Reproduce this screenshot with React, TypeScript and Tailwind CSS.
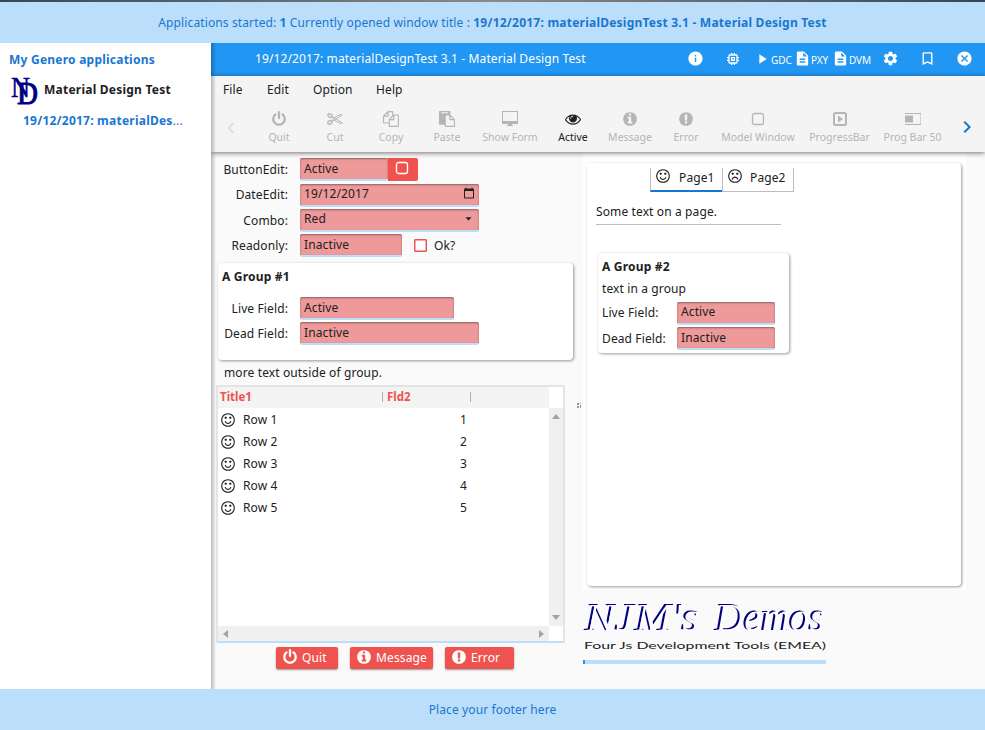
import React from "react";
import {
  MdInfo, MdMemory, MdPlayArrow, MdDescription, MdSettings, MdBookmarkBorder,
  MdCancel, MdChevronLeft, MdChevronRight, MdArrowDropDown, MdCalendarToday,
} from "react-icons/md";

const RING =
  "M1536 896q0-130-51-248.5t-136.5-204-204-136.5-248.5-51-248.5 51-204 136.5-136.5 204-51 248.5 51 248.5 136.5 204 204 136.5 248.5 51 248.5-51 204-136.5 136.5-204 51-248.5zm128 0q0 209-103 385.5t-279.5 279.5-385.5 103-385.5-103-279.5-279.5-103-385.5 103-385.5 279.5-279.5 385.5-103 385.5 103 279.5 279.5 103 385.5z";
const EYES =
  "M768 640q0 53-37.5 90.5t-90.5 37.5-90.5-37.5-37.5-90.5 37.5-90.5 90.5-37.5 90.5 37.5 37.5 90.5zm512 0q0 53-37.5 90.5t-90.5 37.5-90.5-37.5-37.5-90.5 37.5-90.5 90.5-37.5 90.5 37.5 37.5 90.5z";

const P = {
  power:
    "M1664 896q0 156-61 298t-164 245-245 164-298 61-298-61-245-164-164-245-61-298q0-182 80.5-343t226.5-270q43-32 95.5-25t83.5 50q32 42 24.5 94.5t-49.5 84.5q-98 74-151.5 181t-53.5 228q0 104 40.5 198.5t109.5 163.5 163.5 109.5 198.5 40.5 198.5-40.5 163.5-109.5 109.5-163.5 40.5-198.5q0-121-53.5-228t-151.5-181q-42-32-49.5-84.5t24.5-94.5q31-43 84-50t95 25q146 109 226.5 270t80.5 343zm-640-768v640q0 52-38 90t-90 38-90-38-38-90v-640q0-52 38-90t90-38 90 38 38 90z",
  info:
    "M1152 1376v-160q0-14-9-23t-23-9h-96v-512q0-14-9-23t-23-9h-320q-14 0-23 9t-9 23v160q0 14 9 23t23 9h96v320h-96q-14 0-23 9t-9 23v160q0 14 9 23t23 9h448q14 0 23-9t9-23zm-128-896v-160q0-14-9-23t-23-9h-192q-14 0-23 9t-9 23v160q0 14 9 23t23 9h192q14 0 23-9t9-23zm640 416q0 209-103 385.5t-279.5 279.5-385.5 103-385.5-103-279.5-279.5-103-385.5 103-385.5 279.5-279.5 385.5-103 385.5 103 279.5 279.5 103 385.5z",
  error:
    "M896 128q209 0 385.5 103t279.5 279.5 103 385.5-103 385.5-279.5 279.5-385.5 103-385.5-103-279.5-279.5-103-385.5 103-385.5 279.5-279.5 385.5-103zm128 1247v-190q0-14-9-23.5t-22-9.5h-192q-13 0-23 10t-10 23v190q0 13 10 23t23 10h192q13 0 22-9.5t9-23.5zm-2-344l18-621q0-12-10-18-10-8-24-8h-220q-14 0-24 8-10 6-10 18l17 621q0 10 10 17.5t24 7.5h185q14 0 23.5-7.5t10.5-17.5z",
  smile:
    "M1262 1075q-37 121-138 195t-228 74-228-74-138-195q-8-25 4-48.5t38-31.5q25-8 48.5 4t31.5 38q25 80 92.5 129.5t151.5 49.5 151.5-49.5 92.5-129.5q8-26 32-38t49-4 37 31.5 4 48.5z" + EYES + RING,
  frown:
    "M1262 1229q8 25-4 48.5t-37 31.5-49-4-32-38q-25-80-92.5-129.5t-151.5-49.5-151.5 49.5-92.5 129.5q-8 26-31.5 38t-48.5 4q-26-8-38-31.5t-4-48.5q37-121 138-195t228-74 228 74 138 195z" + EYES + RING,
  eye:
    "M1664 960q-152-236-381-353 61 104 61 225 0 185-131.5 316.5t-316.5 131.5-316.5-131.5-131.5-316.5q0-121 61-225-229 117-381 353 133 205 333.5 326.5t434.5 121.5 434.5-121.5 333.5-326.5zm-720-384q0-20-14-34t-34-14q-125 0-214.5 89.5t-89.5 214.5q0 20 14 34t34 14 34-14 14-34q0-86 61-147t147-61q20 0 34-14t14-34zm848 384q0 34-20 69-140 230-376.5 368.5t-499.5 138.5-499.5-139-376.5-368q-20-35-20-69t20-69q140-229 376.5-368t499.5-139 499.5 139 376.5 368q20 35 20 69z",
  copy:
    "M1696 384q40 0 68 28t28 68v1216q0 40-28 68t-68 28h-960q-40 0-68-28t-28-68v-288h-544q-40 0-68-28t-28-68v-672q0-40 20-88t48-76l408-408q28-28 76-48t88-20h416q40 0 68 28t28 68v328q68-40 128-40h416zm-544 213l-299 299h299v-299zm-640-384l-299 299h299v-299zm196 647l316-316v-416h-384v416q0 40-28 68t-68 28h-416v640h512v-256q0-40 20-88t48-76zm956 804v-1152h-384v416q0 40-28 68t-68 28h-416v640h896z",
  paste:
    "M768 1664h896v-640h-416q-40 0-68-28t-28-68v-416h-384v1152zm256-1440v-64q0-13-9.5-22.5t-22.5-9.5h-704q-13 0-22.5 9.5t-9.5 22.5v64q0 13 9.5 22.5t22.5 9.5h704q13 0 22.5-9.5t9.5-22.5zm256 672h299l-299-299v299zm512 128v672q0 40-28 68t-68 28h-960q-40 0-68-28t-28-68v-160h-544q-40 0-68-28t-28-68v-1344q0-40 28-68t68-28h1088q40 0 68 28t28 68v328q21 13 36 28l408 408q28 28 48 76t20 88z",
};

function Fa({ d, size = 16 }: { d: string; size?: number }) {
  return (
    <svg width={size} height={size} viewBox="0 0 1792 1792" fill="currentColor" className="shrink-0">
      <path d={d} />
    </svg>
  );
}

const Scissors = () => (
  <svg width="16" height="16" viewBox="0 0 16 16" fill="none" stroke="currentColor">
    <ellipse cx="3" cy="4.6" rx="2.2" ry="1.7" strokeWidth="1.4" transform="rotate(25 3 4.6)" />
    <ellipse cx="3" cy="11.4" rx="2.2" ry="1.7" strokeWidth="1.4" transform="rotate(-25 3 11.4)" />
    <path d="M5 5.8 15.3 11.8 13.6 12.6 5.6 8.6M5 10.2 15.3 4.2 13.6 3.4 5.6 7.4" strokeWidth="1" />
  </svg>
);
const Desktop = () => (
  <svg width="16" height="16" viewBox="0 0 16 16" fill="currentColor">
    <path fillRule="evenodd" d="M0 0h16v13H10v1h1v1H5v-1H6V13H0zM1 1v9h14V1z" />
  </svg>
);
const Square = () => (
  <svg width="14" height="14" viewBox="0 0 14 14" fill="none" stroke="currentColor">
    <rect x="1.5" y="1.500" width="11" height="11" rx="2" strokeWidth="1.3" />
  </svg>
);
const PlaySquare = () => (
  <svg width="14" height="14" viewBox="0 0 14 14" fill="none" stroke="currentColor">
    <rect x="1" y="1" width="12" height="12" rx="1.5" strokeWidth="2" />
    <path d="M5 3.500v7L10 7z" fill="currentColor" stroke="none" />
  </svg>
);
const HalfBar = () => (
  <svg width="16" height="12" viewBox="0 0 16 12" fill="currentColor">
    <path d="M0 0h16v1H0zM0 11h16v1H0zM0 2.500h8v7H0zM15.500 1h.5v10h-.5z" />
  </svg>
);

const tools: { label: string; width: string; icon: React.ReactNode; active?: boolean }[] = [
  { label: "Quit", width: "w-[56px]", icon: <Fa d={P.power} /> },
  { label: "Cut", width: "w-[56px]", icon: <Scissors /> },
  { label: "Copy", width: "w-[56px]", icon: <Fa d={P.copy} /> },
  { label: "Paste", width: "w-[56px]", icon: <Fa d={P.paste} /> },
  { label: "Show Form", width: "w-[70px]", icon: <Desktop /> },
  { label: "Active", width: "w-[56px]", icon: <Fa d={P.eye} />, active: true },
  { label: "Message", width: "w-[58px]", icon: <Fa d={P.info} /> },
  { label: "Error", width: "w-[54px]", icon: <Fa d={P.error} /> },
  { label: "Model Window", width: "w-[90px]", icon: <Square /> },
  { label: "ProgressBar", width: "w-[73px]", icon: <PlaySquare /> },
  { label: "Prog Bar 50", width: "w-[73px]", icon: <HalfBar /> },
];

function Field({ children, className = "" }: { children: React.ReactNode; className?: string }) {
  return (
    <div className={`flex h-[23px] shrink-0 rounded-[2px] border-b-2 border-[#bbdefb] bg-[#ef9a9a] pl-[4px] shadow-[inset_0_1px_2px_rgba(0,0,0,0.4)] ${className}`}>
      {children}
    </div>
  );
}

function Row({ label, children, className = "" }: { label: string; children: React.ReactNode; className?: string }) {
  return (
    <div className={`flex h-[25px] items-start ${className}`}>
      <span className="w-[71px] shrink-0 whitespace-nowrap text-right leading-[23px]">{label}</span>
      <div className="flex pl-[12px]">{children}</div>
    </div>
  );
}

const cardShadow = "rounded-[4px] bg-white shadow-[1px_1px_3px_rgba(0,0,0,0.4)]";

function RedButton({ d, label, className }: { d: string; label: string; className: string }) {
  return (
    <button className={`flex h-[22px] items-center rounded-[2px] bg-[#ef5350] pl-[6px] text-white shadow-[0_1px_2px_rgba(0,0,0,0.4)] ${className}`}>
      <span className="-mt-[3px]"><Fa d={d} /></span>
      <span className="pl-[4px] leading-[22px]">{label}</span>
    </button>
  );
}

function Sidebar() {
  return (
    <aside className="h-full w-[211px] shrink-0 bg-white font-bold tracking-[0.23px]">
      <div className="pl-[9px] pt-[7px] leading-[20px] text-[#1976d2]">My Genero applications</div>
      <div className="flex h-[40px] items-center pl-[8px]">
        <svg width="32" height="36" viewBox="0 0 32 36" fill="#000080" stroke="#000080" strokeWidth="0.5" fontFamily="Liberation Serif, serif" className="mt-[2px] shrink-0 overflow-visible tracking-normal">
          <text x="3" y="24" fontSize="29" fontWeight="400" textLength="19" lengthAdjust="spacingAndGlyphs">N</text>
          <text x="9" y="31" fontSize="31" fontWeight="400" strokeWidth="1" textLength="21" lengthAdjust="spacingAndGlyphs">D</text>
        </svg>
        <span className="pl-[4px] text-[#212121]">Material Design Test</span>
      </div>
      <div className="pl-[23px] leading-[22px] text-[#1976d2]">19/12/2017: materialDes<span className="font-normal">...</span></div>
    </aside>
  );
}

function TitleBar() {
  return (
    <div className="flex h-[33px] shrink-0 items-center bg-[#2196f3] pl-[44px] text-white">
      <span className="w-[433px] shrink-0 whitespace-nowrap pb-px">19/12/2017: materialDesignTest 3.1 - Material Design Test</span>
      <div className="flex h-full items-center pb-[2px] text-[10px] tracking-[-0.1px]">
        <MdInfo size={17} className="-ml-px" />
        <MdMemory size={16} className="ml-[21px]" />
        <MdPlayArrow size={16} className="ml-[13px]" />
        <span className="w-[24px] pl-px pt-[3px]">GDC</span>
        <MdDescription size={17} />
        <span className="w-[21px] pt-[3px]">PXY</span>
        <MdDescription size={17} />
        <span className="w-[33px] pt-[3px]">DVM</span>
        <MdSettings size={17} />
        <MdBookmarkBorder size={17} className="ml-[20px]" />
        <MdCancel size={17} className="ml-[20px]" />
      </div>
    </div>
  );
}

function Toolbar() {
  return (
    <div className="relative z-10 h-[76px] shrink-0 bg-[#f4f4f4] shadow-[0_1px_5px_rgba(0,0,0,0.55)]">
      <nav className="flex h-[28px] items-center pl-[12px]">
        <span className="w-[44px]">File</span>
        <span className="w-[46px]">Edit</span>
        <span className="w-[63px]">Option</span>
        <span>Help</span>
      </nav>
      <div className="flex h-[46px] pl-[9px] text-[10.5px] tracking-normal text-[#b5b5b5]">
        <MdChevronLeft size={22} className="mr-[9px] mt-[13px] shrink-0 text-[#dddddd]" />
        {tools.map((t) => (
          <div key={t.label} className={`flex shrink-0 flex-col items-center ${t.width} ${t.active ? "text-[#212121]" : ""}`}>
            <div className="flex h-[24px] items-center pt-[6px]">{t.icon}</div>
            <span className="whitespace-nowrap leading-[18px]">{t.label}</span>
          </div>
        ))}
        <MdChevronRight size={24} className="ml-[6px] mt-[11px] shrink-0 text-[#1976d2]" />
      </div>
    </div>
  );
}

function DataTable() {
  return (
    <div className="-ml-px flex h-[258px] w-[349px] flex-col rounded-[2px] border-2 border-[#e4e4e4] border-b-[#bbdefb] bg-white">
      <div className="flex h-[21px] w-[331px] shrink-0 items-center bg-[#f4f4f4] pb-px pl-[2px] text-[11.5px] font-bold tracking-[0px] text-[#ef5350]">
        <span className="w-[162px]">Title1</span>
        <span className="h-[10px] w-px bg-[#b0b0b0]" />
        <span className="w-[87px] pl-[4px]">Fld2</span>
        <span className="h-[10px] w-px bg-[#b0b0b0]" />
      </div>
      <div className="flex min-h-0 flex-1">
        <div className="flex w-[331px] flex-col">
          <div className="flex-1">
            {[1, 2, 3, 4, 5].map((n) => (
              <div key={n} className="flex h-[22px] items-center pl-[2px] pt-[2px]">
                <span className="-mt-px shrink-0"><Fa d={P.smile} /></span>
                <span className="w-[141px] pl-[7px]">Row {n}</span>
                <span className="w-[90px] text-right">{n}</span>
              </div>
            ))}
          </div>
          <div className="flex h-[15px] items-center justify-between bg-[#f0f0f0] px-[5px]">
            <svg width="5" height="8"><path d="M5 0v8L0 4z" fill="#a3a3a3" /></svg>
            <svg width="5" height="8"><path d="M0 0v8l5-4z" fill="#a3a3a3" /></svg>
          </div>
        </div>
        <div className="mb-[15px] flex w-[14px] flex-col items-center justify-between bg-[#f0f0f0] py-[6px]">
          <svg width="8" height="5"><path d="M0 5h8L4 0z" fill="#a3a3a3" /></svg>
          <svg width="8" height="5"><path d="M0 0h8L4 5z" fill="#a3a3a3" /></svg>
        </div>
      </div>
    </div>
  );
}

function LeftPane() {
  return (
    <section className="flex w-[365px] shrink-0 flex-col pl-[6px] pt-[6px]">
      <div className="flex h-[105px] flex-col">
        <Row label="ButtonEdit:">
          <Field className="w-[88px] leading-[22px]">Active</Field>
          <button className="flex h-[23px] w-[30px] items-start justify-center rounded-r-[2px] bg-[#ef5350] pr-[2px] pt-[3px] text-white">
            <Square />
          </button>
        </Row>
        <Row label="DateEdit:">
          <Field className="mt-px w-[179px] justify-between pr-[4px] leading-[20px]">
            19/12/2017
            <MdCalendarToday size={12} className="mt-[3px]" />
          </Field>
        </Row>
        <Row label="Combo:" className="mt-px">
          <Field className="w-[179px] justify-between pl-[2px] pr-[3px] leading-[19px]">
            Red
            <MdArrowDropDown size={15} className="mt-[2px]" />
          </Field>
        </Row>
        <Row label="Readonly:">
          <Field className="w-[102px] leading-[22px]">Inactive</Field>
          <span className="ml-[12px] mt-[5px] h-[13px] w-[13px] rounded-[1px] border border-[#ef5350] bg-white shadow-[inset_0_0_0_0.5px_#ef5350]" />
          <span className="pl-[7px] leading-[23px]">Ok?</span>
        </Row>
      </div>
      <div className={`ml-[1px] h-[97px] w-[355px] pt-[4px] ${cardShadow}`}>
        <div className="pl-[4px] font-bold leading-[20px] tracking-[0.2px]">A Group #1</div>
        <div className="-ml-px pt-[10px]">
          <Row label="Live Field:"><Field className="w-[154px] leading-[22px]">Active</Field></Row>
          <Row label="Dead Field:"><Field className="w-[179px] leading-[22px]">Inactive</Field></Row>
        </div>
      </div>
      <div className="h-[25px] pl-[7px] leading-[25px]">more text outside of group.</div>
      <DataTable />
      <div className="flex pl-[59px] pt-[4px]">
        <RedButton d={P.power} label="Quit" className="w-[62px]" />
        <RedButton d={P.info} label="Message" className="ml-[12px] w-[83px]" />
        <RedButton d={P.error} label="Error" className="ml-[12px] w-[69px]" />
      </div>
    </section>
  );
}

function Banner() {
  return (
    <svg width="244" height="62" viewBox="0 0 244 62" className="mt-[3px] block tracking-normal">
      <g fill="#fdfdfd" fontFamily="Liberation Serif, serif" fontStyle="italic" fontSize="40" className="drop-shadow-[-1.3px_-1px_0_#000080]">
        <text x="3" y="38" textLength="114" lengthAdjust="spacingAndGlyphs">NJM's</text>
        <text x="133" y="38" textLength="109" lengthAdjust="spacingAndGlyphs">Demos</text>
      </g>
      <text x="1" y="56" fill="#222222" fontFamily="Lato, sans-serif" fontSize="10" textLength="242" lengthAdjust="spacingAndGlyphs">Four Js Development Tools (EMEA)</text>
    </svg>
  );
}

function RightPane() {
  return (
    <section className="w-[383px] shrink-0">
      <div className="h-[438px] bg-white pl-[4px] pt-[11px]">
        <div className={`h-[423px] w-[374px] pt-[5px] ${cardShadow}`}>
          <div className="ml-[63px] flex h-[24px]">
            <div className="flex w-[72px] items-start border-b-2 border-l border-[#bdbdbd] border-b-[#1976d2] pl-[4px]">
              <Fa d={P.smile} />
              <span className="pl-[8px] leading-[20px]">Page1</span>
            </div>
            <div className="flex w-[72px] items-start border-x border-b border-[#bdbdbd] pl-[4px]">
              <Fa d={P.frown} />
              <span className="pl-[7px] leading-[20px]">Page2</span>
            </div>
          </div>
          <div className="ml-[9px] mt-[7px] h-[26px] w-[185px] border-b border-[#bdbdbd] leading-[26px]">Some text on a page.</div>
          <div className={`ml-[11px] mt-[28px] h-[100px] w-[191px] pl-[4px] pt-[3px] ${cardShadow}`}>
            <div className="font-bold leading-[22px] tracking-[0.2px]">A Group #2</div>
            <div className="leading-[22px]">text in a group</div>
            <div className="flex h-[25px] pt-[2px]">
              <span className="w-[75px] leading-[21px]">Live Field:</span>
              <Field className="w-[98px] leading-[20px]">Active</Field>
            </div>
            <div className="flex h-[25px] pt-[2px]">
              <span className="w-[75px] leading-[23px]">Dead Field:</span>
              <Field className="w-[98px] leading-[22px]">Inactive</Field>
            </div>
          </div>
        </div>
      </div>
      <Banner />
      <div className="mt-[5px] h-[4px] w-[243px] bg-[#bbdefb]"><div className="h-full w-[2px] bg-[#2196f3]" /></div>
    </section>
  );
}

export default function App() {
  return (
    <div className="flex h-[730px] w-[985px] flex-col overflow-hidden bg-[#fafafa] font-['Noto_Sans',sans-serif] text-[12px] tracking-[0.12px] text-[#212121]">
      <div className="h-[2px] shrink-0 bg-linear-to-r from-[#33485a] via-[#8a8a86] to-[#35465a]" />
      <header className="flex h-[41px] shrink-0 items-center justify-center whitespace-pre bg-[#bbdefb] text-[#1976d2]">
        <span>Applications started: <b>1</b> Currently opened window title : <b className="tracking-[0.23px]">19/12/2017: materialDesignTest 3.1 - Material Design Test</b></span>
      </header>
      <div className="flex h-[646px] shrink-0">
        <Sidebar />
        <main className="relative flex w-[774px] flex-col overflow-hidden">
          <TitleBar />
          <Toolbar />
          <div className="flex flex-1">
            <LeftPane />
            <div className="flex w-[7px] items-center pb-[31px] pl-px">
              <svg width="5" height="7" fill="#999999"><path d="M0 1h2v2H0zM3 1h1v1H3zM0 4h2v2H0zM3 3h1v3H3z" /></svg>
            </div>
            <RightPane />
          </div>
          <div className="absolute inset-y-0 left-0 z-20 w-[5px] bg-linear-to-r from-black/25 to-transparent" />
        </main>
      </div>
      <footer className="flex h-[41px] shrink-0 items-center justify-center bg-[#bbdefb] text-[#1976d2]">Place your footer here</footer>
    </div>
  );
}
